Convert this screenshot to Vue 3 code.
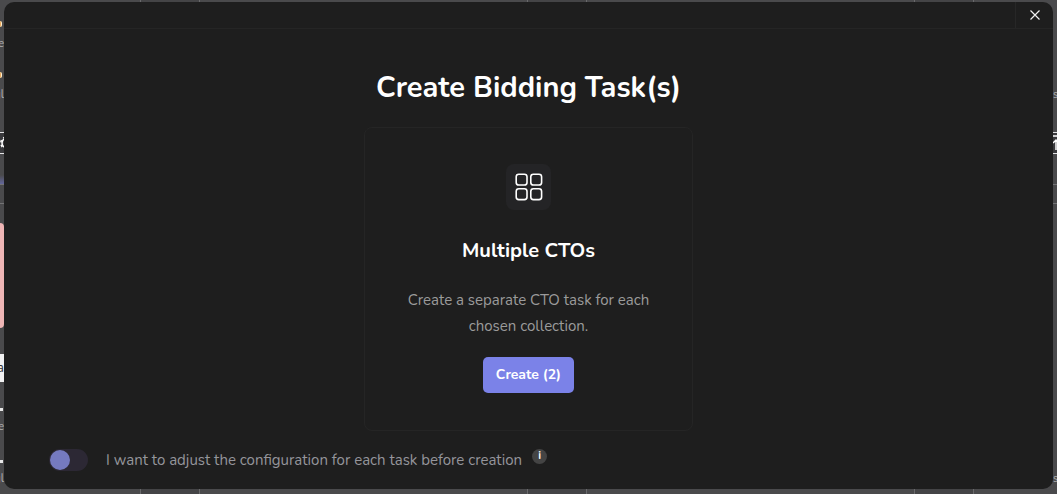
<template>
  <div class="page">
    <!-- Dimmed collection grid that sits behind the dialog -->
    <div class="backdrop" aria-hidden="true">
      <div class="columns">
        <i v-for="n in 3" :key="n" class="column"></i>
      </div>
      <div class="strip left">
        <span v-for="(row, i) in leftRows" :key="i" :class="['row', row.kind]" :style="{ height: row.height + 'px' }">
          <svg v-if="row.kind === 'tool'" width="14" height="14" viewBox="0 0 14 14" fill="none" stroke="currentColor">
            <circle cx="7" cy="7" r="5" stroke-width="1.5" />
            <circle cx="7" cy="7" r="6.2" stroke-width="1.5" stroke-dasharray="2.4 2.5" />
            <circle cx="7" cy="7" r="2" />
          </svg>
          {{ row.text }}
        </span>
      </div>
      <div class="strip right">
        <span v-for="(row, i) in rightRows" :key="i" :class="['row', row.kind]" :style="{ height: row.height + 'px' }">
          <svg v-if="row.kind === 'tool'" width="10" height="16" viewBox="0 0 10 16" fill="none" stroke="currentColor" stroke-width="1.5">
            <path d="M0 1h10M3 15V5M0 8l3-3 3 3" />
          </svg>
          {{ row.text }}
        </span>
      </div>
    </div>

    <section class="modal" role="dialog" aria-labelledby="dialog-title">
      <header class="modal-header">
        <button class="close" type="button" aria-label="Close">
          <svg width="10" height="10" viewBox="0 0 10 10" fill="none" stroke="currentColor" stroke-width="1.2">
            <path d="M0.5 0.5l9 9M9.5 0.5l-9 9" />
          </svg>
        </button>
      </header>

      <div class="modal-body">
        <h1 id="dialog-title">Create Bidding Task(s)</h1>

        <article class="card">
          <div class="card-icon">
            <svg width="30" height="30" viewBox="0 0 30 30" fill="none" stroke="currentColor" stroke-width="1.6">
              <rect x="2.2" y="2.2" width="10.8" height="10.8" rx="2.6" />
              <rect x="16.8" y="2.2" width="10.8" height="10.8" rx="2.6" />
              <rect x="2.2" y="16.8" width="10.8" height="10.8" rx="2.6" />
              <rect x="16.8" y="16.8" width="10.8" height="10.8" rx="2.6" />
            </svg>
          </div>
          <h2>Multiple CTOs</h2>
          <p>Create a separate CTO task for each chosen collection.</p>
          <button class="create" type="button">Create ({{ selected }})</button>
        </article>

        <div class="option">
          <input id="adjust" v-model="adjust" class="switch" type="checkbox" role="switch" />
          <label for="adjust">I want to adjust the configuration for each task before creation</label>
          <span class="info">i</span>
        </div>
      </div>
    </section>
  </div>
</template>

<script setup>
import { ref } from 'vue'

const selected = ref(2)
const adjust = ref(false)

// Slices of the grid that stay visible on both sides of the dialog
const leftRows = [
  { kind: 'gap', height: 21 },
  { kind: 'badge', height: 6 },
  { kind: 'gap', height: 9 },
  { kind: 'label', height: 16, text: 'e' },
  { kind: 'gap', height: 20 },
  { kind: 'badge', height: 6 },
  { kind: 'gap', height: 9 },
  { kind: 'label', height: 16, text: 'gl' },
  { kind: 'gap', height: 29 },
  { kind: 'tool', height: 22 },
  { kind: 'gap', height: 21 },
  { kind: 'glow', height: 9 },
  { kind: 'line', height: 19 },
  { kind: 'line', height: 20 },
  { kind: 'pink', height: 105 },
  { kind: 'gap', height: 26 },
  { kind: 'white', height: 28, text: 'a' },
  { kind: 'gap', height: 26 },
  { kind: 'dot', height: 3 },
  { kind: 'gap', height: 8 },
  { kind: 'label', height: 16, text: 'e' },
  { kind: 'gap', height: 25 },
  { kind: 'dot', height: 3 },
  { kind: 'gap', height: 8 },
  { kind: 'label', height: 16, text: 'gl' }
]

const rightRows = [
  { kind: 'gap', height: 87 },
  { kind: 'label', height: 16, text: 's' },
  { kind: 'gap', height: 29 },
  { kind: 'tool', height: 22 },
  { kind: 'gap', height: 30 },
  { kind: 'line', height: 19 },
  { kind: 'line', height: 268 },
  { kind: 'label', height: 16, text: 's' }
]
</script>

<style>
body {
  margin: 0;
  background: #4a4a4c;
}
</style>

<style scoped>
.page {
  position: relative;
  display: flow-root;
  min-height: 100vh;
  box-sizing: border-box;
  overflow: hidden;
  font-family: Nunito, Lato, "Noto Sans", sans-serif;
  color: #fff;
}

.backdrop {
  position: absolute;
  inset: 0;
  display: flex;
  justify-content: space-between;
  background: #4a4a4c;
}

.columns {
  position: absolute;
  inset: 0;
  display: flex;
  gap: 328px;
  padding-left: 140px;
}

.column {
  flex: 0 0 58px;
  margin-right: -1px;
  background: #444446;
  border: solid #69696b;
  border-width: 0 1px;
}

.strip {
  width: 4px;
}

/* Text of the left slice runs out of the window, so its end is what shows */
.row {
  display: flex;
  justify-content: flex-end;
  align-items: center;
  box-sizing: border-box;
  font-size: 11px;
  line-height: 16px;
  color: #b0b0b1;
}

.right .row {
  justify-content: flex-start;
}

.badge {
  width: 2px;
  background: #eba95c;
  border-right: 1px solid #fff0cf;
  border-radius: 0 2px 2px 0;
}

.tool {
  border: solid #e4e4e6;
  border-width: 1px 0;
  background: #39393c;
  color: #fff;
}

.tool svg {
  flex: none;
}

.left .tool {
  justify-content: flex-start;
}

.glow {
  background: linear-gradient(#4a4a4c, #64679b);
}

.line {
  border-top: 1px solid #737375;
}

.pink {
  background: #eeb5b5;
  border-radius: 0 4px 4px 0;
}

.white {
  background: #f2f2f3;
  color: #333;
  font-size: 13px;
  line-height: 28px;
}

.dot {
  width: 3px;
  background: #e8e8e8;
}

.modal {
  position: relative;
  margin: 2px 4px 5px;
  background: #1e1e1e;
  border-radius: 10px;
  overflow: hidden;
}

.modal-header {
  display: flex;
  justify-content: flex-end;
  height: 26px;
  border-bottom: 1px solid #252525;
}

.close {
  display: grid;
  place-items: center;
  width: 38px;
  padding: 0;
  color: #f2f2f2;
  background: none;
  border: 0;
  border-left: 1px solid #272727;
}

.modal-body {
  display: flex;
  flex-direction: column;
  align-items: center;
  padding: 38px 45px 18px;
}

h1 {
  margin: 0 0 18px;
  font-size: 29px;
  line-height: 42px;
  font-weight: 700;
}

.card {
  display: flex;
  flex-direction: column;
  align-items: center;
  box-sizing: border-box;
  width: 329px;
  max-width: 100%;
  padding: 36px 40px 37px;
  border: 1px solid #252525;
  border-radius: 8px;
  text-align: center;
}

.card-icon {
  display: grid;
  place-items: center;
  width: 45px;
  height: 46px;
  background: #242426;
  border-radius: 8px;
}

h2 {
  margin: 27px 0 22px;
  font-size: 20px;
  line-height: 28px;
  font-weight: 700;
}

p {
  margin: 0 0 18px;
  font-size: 15px;
  line-height: 26px;
  color: #9b9b9b;
}

.create {
  height: 36px;
  padding: 0 13px 2px;
  font-family: inherit;
  font-size: 14px;
  font-weight: 700;
  color: #fff;
  background: #7b82e8;
  border: 0;
  border-radius: 5px;
}

.option {
  display: flex;
  align-items: center;
  align-self: stretch;
  margin-top: 18px;
  font-size: 15px;
  line-height: 22px;
  color: #95959b;
}

.switch {
  appearance: none;
  width: 39px;
  height: 22px;
  margin: 0 18px 0 0;
  background: #2c2834;
  border-radius: 11px;
}

.switch::before {
  content: "";
  display: block;
  width: 20px;
  height: 20px;
  margin: 1px;
  background: #757ac0;
  border-radius: 50%;
}

.switch:checked::before {
  margin-left: 18px;
}

.info {
  align-self: flex-start;
  width: 15px;
  height: 15px;
  margin-left: 10px;
  font-size: 11px;
  line-height: 14px;
  font-weight: 700;
  text-align: center;
  color: #fff;
  background: #444;
  border-radius: 50%;
}
</style>
